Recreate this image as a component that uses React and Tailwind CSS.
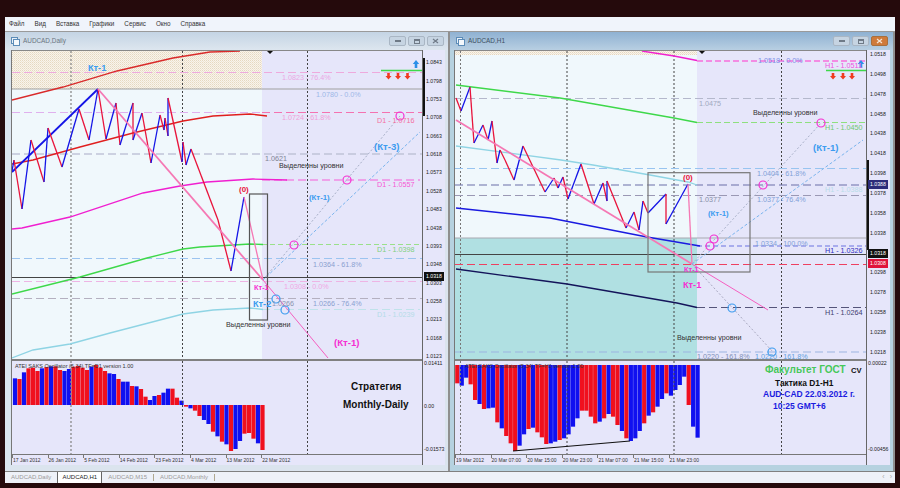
import React from 'react';

const BLUE = '#1414e6';
const RED = '#e8143c';
const PINK = '#f472b0';
const KT = '#3c9cf0';
const MAGENTA = '#f52fd2';

const menu = ['Файл', 'Вид', 'Вставка', 'Графики', 'Сервис', 'Окно', 'Справка'];

// all chart coordinates are page pixels, the svg viewBox takes care of the offset
const leftPrices = ['1.0843', '1.0798', '1.0753', '1.0708', '1.0663', '1.0618', '1.0573', '1.0528', '1.0483', '1.0438', '1.0393', '1.0348', '1.0303', '1.0258', '1.0213', '1.0168', '1.0123'];
const rightPrices = ['1.0518', '1.0498', '1.0478', '1.0458', '1.0438', '1.0418', '1.0398', '1.0378', '1.0358', '1.0338', '1.0318', '1.0298', '1.0278', '1.0258', '1.0238', '1.0218'];
const leftDates = ['17 Jan 2012', '26 Jan 2012', '5 Feb 2012', '14 Feb 2012', '23 Feb 2012', '4 Mar 2012', '13 Mar 2012', '22 Mar 2012'];
const rightDates = ['19 Mar 2012', '20 Mar 07:00', '20 Mar 15:00', '20 Mar 23:00', '21 Mar 07:00', '21 Mar 15:00', '21 Mar 23:00'];

const leftZig = [[12, 171], [14, 160], [22, 209], [31, 140], [44, 182], [48, 128], [62, 167], [79, 109], [89, 140], [98, 89], [106, 139], [116, 103], [120, 145], [133, 103], [133, 140], [142, 113], [151, 163], [160, 115], [164, 130], [165, 118], [168, 136], [168, 98], [182, 162], [183, 142], [186, 165], [191, 149], [218, 220], [231, 271], [244, 197]];
const rightZig = [[456, 98], [461, 111], [470, 87], [474, 143], [483, 125], [488, 140], [492, 121], [497, 163], [500, 150], [505, 160], [514, 180], [523, 146], [545, 192], [554, 178], [558, 188], [563, 177], [568, 199], [581, 164], [594, 204], [603, 183], [607, 201], [607, 181], [626, 228], [634, 212], [639, 230], [643, 201], [648, 213], [666, 194], [666, 224], [688, 184]];

// [colour, top of bar in 3x zoom units]
const leftBars = [['b', 70], ['r', 72], ['b', 52], ['r', 40], ['r', 38], ['r', 48], ['b', 40], ['r', 36], ['b', 34], ['r', 34], ['r', 45], ['b', 48], ['b', 42], ['r', 35], ['r', 33], ['r', 38], ['r', 45], ['b', 35], ['r', 30], ['r', 38], ['r', 48], ['b', 55], ['b', 57], ['r', 72], ['b', 80], ['b', 80], ['r', 93], ['b', 94], ['r', 102], ['r', 125], ['b', 135], ['b', 123], ['r', 120], ['b', 113], ['b', 101], ['r', 101], ['r', 128], ['b', 137], ['r', 155], ['b', 160], ['r', 167], ['r', 183], ['b', 195], ['b', 207], ['r', 230], ['b', 244], ['r', 260], ['b', 268], ['r', 288], ['b', 282], ['b', 258], ['r', 236], ['r', 234], ['r', 251], ['b', 265], ['r', 285]];
const rightBars = [['r', 85], ['b', 92], ['b', 68], ['r', 88], ['r', 135], ['b', 147], ['r', 162], ['b', 160], ['b', 158], ['r', 202], ['b', 220], ['r', 243], ['r', 265], ['r', 288], ['b', 272], ['b', 238], ['r', 222], ['b', 218], ['r', 232], ['r', 247], ['r', 267], ['b', 265], ['b', 260], ['r', 255], ['b', 250], ['b', 238], ['b', 215], ['b', 190], ['r', 167], ['r', 167], ['r', 185], ['r', 205], ['b', 200], ['r', 190], ['b', 177], ['r', 185], ['r', 210], ['b', 228], ['r', 250], ['b', 258], ['b', 250], ['b', 228], ['r', 205], ['b', 182], ['r', 172], ['b', 155], ['b', 132], ['r', 115], ['b', 122], ['b', 105], ['b', 90], ['b', 65], ['r', 150], ['b', 215], ['b', 248]];

const Poly = ({ pts, color, w = 1.3, dash }) => (
    <polyline points={pts.map(p => p.join(',')).join(' ')} fill="none" stroke={color} strokeWidth={w} strokeDasharray={dash} />
);

const HLine = ({ y, x1, x2, color, w = 1, dash = '8 4' }) => (
    <line x1={x1} x2={x2} y1={y} y2={y} stroke={color} strokeWidth={w} strokeDasharray={dash} />
);

const VDots = ({ x, y1, y2, color = '#444', w = 1 }) => (
    <line x1={x} x2={x} y1={y1} y2={y2} stroke={color} strokeWidth={w} strokeDasharray="2 2" />
);

const Ring = ({ x, y, color = MAGENTA }) => (
    <circle cx={x} cy={y} r="4" fill="none" stroke={color} strokeWidth="1.2" />
);

const T = ({ x, y, color = '#333', size = 7.2, bold, children }) => (
    <text x={x} y={y} fill={color} fontSize={size} fontWeight={bold ? 700 : 400}>{children}</text>
);

const Zig = ({ pts }) => pts.slice(1).map((p, i) => (
    <line key={i} x1={pts[i][0]} y1={pts[i][1]} x2={p[0]} y2={p[1]} stroke={p[1] < pts[i][1] ? BLUE : RED} strokeWidth="1.3" />
));

const DownArrow = ({ x, y }) => (
    <polygon points={`${x - 1.3},${y - 3} ${x + 1.3},${y - 3} ${x + 1.3},${y} ${x + 3},${y} ${x},${y + 3.5} ${x - 3},${y} ${x - 1.3},${y}`} fill="#f03a1e" />
);

const UpArrow = ({ x, y }) => (
    <polygon points={`${x - 1.3},${y + 4} ${x + 1.3},${y + 4} ${x + 1.3},${y} ${x + 3.2},${y} ${x},${y - 4} ${x - 3.2},${y} ${x - 1.3},${y}`} fill="#2b8fe8" />
);

const Band = ({ id, x, y, width, height }) => (
    <>
        <defs>
            <pattern id={id} width="2" height="2" patternUnits="userSpaceOnUse">
                <rect width="2" height="2" fill="#f8f4ec" />
                <rect width="1" height="1" fill="#e6d8c0" />
                <rect x="1" y="1" width="1" height="1" fill="#efe4d2" />
            </pattern>
        </defs>
        <rect x={x} y={y} width={width} height={height} fill={`url(#${id})`} />
    </>
);

const DailyMain = () => (
    <svg viewBox="12 51 410 308" className="block w-[410px] h-[308px]">
        <rect x="12" y="51" width="250" height="308" fill="#f0f8fc" />
        <rect x="262" y="51" width="160" height="308" fill="#e6e6fa" />
        <Band id="dailyBand" x={12} y={51} width={250} height={38} />
        <VDots x={71} y1={51} y2={359} color="#8a8a8a" w={1.3} />
        <VDots x={182.5} y1={51} y2={359} />
        <VDots x={307.5} y1={51} y2={359} />

        <line x1="12" x2="422" y1="89" y2="89" stroke="#a0a0a0" />
        <HLine y={72.5} x1={12} x2={422} color="#eeaadd" />
        <HLine y={112.5} x1={12} x2={262} color="#e0b0ee" />
        <HLine y={112.5} x1={262} x2={422} color={PINK} />
        <HLine y={154} x1={12} x2={422} color="#c0c4d8" w={1.5} />
        <HLine y={180} x1={262} x2={420} color="#f55fd8" />
        <HLine y={244.5} x1={262} x2={420} color="#9ae08a" dash="5 3" />
        <HLine y={258.5} x1={12} x2={422} color="#9cc4f0" />
        <line x1="12" x2="422" y1="277.5" y2="277.5" stroke="#444" />
        <HLine y={281.5} x1={12} x2={422} color="#eeb4e4" />
        <HLine y={298.5} x1={12} x2={422} color="#b4b0c0" />
        <HLine y={309.5} x1={262} x2={420} color="#bfe2ea" />

        <Poly color="#d92a2a" pts={[[12, 100], [63, 87], [117, 71], [173, 58], [210, 52], [240, 51]]} />
        <Poly color="#e01f1f" pts={[[12, 164], [33, 160], [80, 147], [133, 133], [183, 121], [213, 116], [250, 114], [267, 116]]} />
        <Poly color="#f01fd0" pts={[[12, 229], [22, 228], [70, 217], [143, 193], [180, 186], [207, 182], [253, 179], [287, 180]]} />
        <Poly color="#3ed84a" pts={[[12, 294], [80, 277], [147, 258], [183, 249], [200, 247], [250, 244], [263, 244.5]]} />
        <Poly color="#8fd4e4" pts={[[12, 358], [33, 350], [70, 344], [110, 333], [183, 314], [213, 310], [250, 308], [263, 309.5]]} />

        <Poly w={1.8} color={BLUE} pts={[[12, 172], [98, 89]]} />
        <Zig pts={leftZig} />
        <Poly w={1.8} color="#f578b4" pts={[[98, 89], [263, 280]]} />
        <Poly w={1.3} color="#f578b4" pts={[[244, 197], [263, 280]]} />
        <Poly w={1} color="#f55fc0" pts={[[263, 280], [328, 358]]} />
        <Poly w={1} color="#a8b0c8" dash="2 2" pts={[[263, 280], [400, 116]]} />
        <Poly w={1} color="#7ab4ee" dash="3 2" pts={[[263, 280], [420, 132]]} />

        <rect x="249.5" y="194" width="18" height="126" fill="none" stroke="#555" strokeWidth="1.2" />
        <Ring x={400} y={116} />
        <Ring x={347} y={180} />
        <Ring x={294} y={245} />
        <Ring x={276} y={299} color="#3c9cf0" />
        <Ring x={285} y={310} color="#3c9cf0" />
        <polygon points="267,51 273,51 270,54" fill="#111" />

        <UpArrow x={416} y={64} />
        <line x1="381" x2="422" y1="70.5" y2="70.5" stroke="#3ed84a" strokeWidth="1.5" />
        <DownArrow x={388.5} y={76} />
        <DownArrow x={398} y={76} />
        <DownArrow x={407.5} y={76} />

        <T x={88} y={70.5} color={KT} size={9.2} bold>Кт-1</T>
        <T x={282} y={79.5} color="#eaa8e4">1.0823 - 76.4%</T>
        <T x={316} y={96.5} color="#9db8e8">1.0780 - 0.0%</T>
        <T x={282} y={119.5} color="#f0a0d8">1.0724 - 61.8%</T>
        <T x={377} y={122.5} color="#f570a0">D1 - 1.0716</T>
        <T x={374} y={150} color={KT} size={9.6} bold>(Кт-3)</T>
        <T x={265} y={161} color="#7f8494">1.0621</T>
        <T x={279} y={168}>Выделенны уровни</T>
        <T x={377} y={187} color="#f655d4">D1 - 1.0557</T>
        <T x={239} y={192} color={RED} size={8} bold>(0)</T>
        <T x={309} y={200} color={KT} size={7.8} bold>(Кт-1)</T>
        <T x={377} y={252} color="#80d080">D1 - 1.0398</T>
        <T x={313} y={266.5} color="#8aa0d0">1.0364 - 61.8%</T>
        <T x={284} y={288.5} color="#f0a8e4">1.0308 - 0.0%</T>
        <T x={254} y={290} color={MAGENTA} size={7.4} bold>Кт-1</T>
        <T x={272} y={306} color="#8a94b0">1.0266</T>
        <T x={253} y={307} color={KT} size={9.2} bold>Кт-2</T>
        <T x={313} y={305.5} color="#8aa0d0">1.0266 - 76.4%</T>
        <T x={377} y={316.5} color="#b4dce8">D1 - 1.0239</T>
        <T x={226} y={327}>Выделенны уровни</T>
        <T x={334} y={346} color={MAGENTA} size={9.6} bold>(Кт-1)</T>
    </svg>
);

const HourMain = () => (
    <svg viewBox="455 51 411 308" className="block w-[411px] h-[308px]">
        <rect x="455" y="51" width="242" height="308" fill="#f0f8fc" />
        <rect x="697" y="51" width="169" height="308" fill="#e6e6fa" />
        <rect x="455" y="238" width="242" height="121" fill="#b0e0e2" />
        <Band id="hourBand" x={455} y={51} width={242} height={4} />
        <VDots x={460.5} y1={51} y2={359} color="#777" />
        <VDots x={567} y1={51} y2={359} />
        <VDots x={674} y1={51} y2={359} />
        <VDots x={781.5} y1={51} y2={359} />

        <HLine y={61} x1={697} x2={866} color="#f76fdc" w={1.5} dash="6 3" />
        <HLine y={98.5} x1={455} x2={866} color="#b4b8cc" dash="8 4" />
        <HLine y={122.5} x1={697} x2={866} color="#8ee07e" dash="6 3" />
        <HLine y={168.5} x1={455} x2={866} color="#98c4f0" />
        <HLine y={185} x1={455} x2={866} color="#6a6ea8" />
        <HLine y={195.5} x1={455} x2={866} color="#9a98b4" />
        <line x1="455" x2="866" y1="238" y2="238" stroke="#a8a8b0" />
        <HLine y={246} x1={697} x2={866} color="#6a72e0" dash="5 3" />
        <line x1="455" x2="866" y1="254.5" y2="254.5" stroke="#444" />
        <HLine y={264.5} x1={455} x2={866} color="#ee4060" />
        <HLine y={307.5} x1={697} x2={866} color="#55557a" />
        <HLine y={352} x1={455} x2={866} color="#9cb4e0" />

        <Poly color="#f01fd0" pts={[[642, 51], [674, 56], [697, 60.5]]} />
        <Poly color="#3ed84a" pts={[[456, 85], [560, 98], [600, 105], [674, 118], [697, 122.5]]} />
        <Poly color="#8fd4e4" pts={[[456, 146], [561, 160], [593, 165], [650, 175], [688, 182], [697, 185]]} />
        <Poly w={1.5} color="#1a1ae0" pts={[[456, 208], [550, 218], [647, 237], [700, 246]]} />
        <Poly w={1.3} color="#14145a" pts={[[456, 269], [567, 284], [677, 303], [697, 307.5]]} />

        <Zig pts={rightZig} />
        <Poly w={1.8} color="#f578b4" pts={[[456, 120], [692, 264]]} />
        <Poly w={1.3} color="#f578b4" pts={[[688, 184], [692, 264]]} />
        <Poly w={1} color="#f55fc0" pts={[[692, 264], [768, 310]]} />
        <Poly w={1} color="#a8a8c0" dash="2 2" pts={[[692, 264], [773, 352]]} />
        <Poly w={1} color="#a8b0c8" dash="2 2" pts={[[692, 264], [821, 123]]} />
        <Poly w={1} color="#7ab4ee" dash="3 2" pts={[[692, 264], [863, 140]]} />

        <rect x="648" y="172.7" width="102" height="99.3" fill="none" stroke="#777" strokeWidth="1.2" />
        <Ring x={821} y={123} />
        <Ring x={763} y={185} />
        <Ring x={714} y={239} />
        <Ring x={710} y={246} />
        <Ring x={732} y={308} color="#3c9cf0" />
        <Ring x={772} y={352} color="#3c9cf0" />
        <polygon points="699,51 705,51 702,54" fill="#111" />

        <UpArrow x={861} y={64} />
        <line x1="826" x2="866" y1="70.5" y2="70.5" stroke="#3ed84a" strokeWidth="1.5" />
        <DownArrow x={833} y={76} />
        <DownArrow x={843} y={76} />
        <DownArrow x={852} y={76} />

        <T x={758} y={62.5} color="#8090e8">1.0518 - 0.0%</T>
        <T x={825} y={68} color="#f050e0">H1 - 1.0511</T>
        <T x={699} y={105.5} color="#a0a8c0">1.0475</T>
        <T x={753} y={114.5}>Выделенны уровни</T>
        <T x={825} y={129.5} color="#70c870">H1 - 1.0450</T>
        <T x={813} y={151} color={KT} size={9.6} bold>(Кт-1)</T>
        <T x={757} y={175.5} color="#80a0d8">1.0404 - 61.8%</T>
        <T x={683} y={180} color={RED} size={8} bold>(0)</T>
        <T x={825} y={191.5} color="#b8dce8">H1 - 1.0388</T>
        <T x={699} y={202} color="#8890a8">1.0377</T>
        <T x={757} y={202} color="#80a0d8">1.0377 - 76.4%</T>
        <T x={708} y={216} color={KT} size={7.8} bold>(Кт-1)</T>
        <T x={755} y={245.5} color="#80a0d8">1.0334 - 100.0%</T>
        <T x={825} y={253} color="#3030c0">H1 - 1.0326</T>
        <T x={684} y={272} color={MAGENTA} size={7.4} bold>Кт-1</T>
        <T x={683} y={288} color={MAGENTA} size={9.2} bold>Кт-1</T>
        <T x={825} y={314.5} color="#404070">H1 - 1.0264</T>
        <T x={677} y={339.5}>Выделенны уровни</T>
        <T x={697} y={358.5} color="#8090b8">1.0220 - 161.8%</T>
        <T x={755} y={358.5} color="#60a0e0">1.0220 - 161.8%</T>
    </svg>
);

const Bar = ({ kind, x, y1, y2 }) => (
    <rect x={x - 2.1} y={Math.min(y1, y2)} width="4.2" height={Math.abs(y2 - y1)} fill={kind === 'b' ? '#1010f0' : '#f0101e'} />
);

const DailyOsc = () => (
    <svg viewBox="12 361 410 93" className="block w-[410px] h-[93px]">
        <rect x="12" y="361" width="410" height="93" fill="#e6e6fa" />
        {leftBars.map(([kind, v], i) => (
            <Bar key={i} kind={kind} x={15 + i * 4.5} y1={405} y2={355 + v / 3} />
        ))}
        <VDots x={71} y1={361} y2={454} color="#8a8a8a" w={1.3} />
        <VDots x={182.5} y1={361} y2={454} />
        <VDots x={307.5} y1={361} y2={454} />
        <T x={15} y={368} size={5.5}>ATEI SAKS Oscillator (5,34)  TF=D1  version 1.00</T>
        <T x={351} y={390} color="#111" size={10} bold>Стратегия</T>
        <T x={343} y={408} color="#111" size={10} bold>Monthly-Daily</T>
    </svg>
);

const HourOsc = () => (
    <svg viewBox="455 361 411 93" className="block w-[411px] h-[93px]">
        <rect x="455" y="361" width="411" height="93" fill="#e6e6fa" />
        {rightBars.map(([kind, v], i) => (
            <Bar key={i} kind={kind} x={457.3 + i * 4.45} y1={365} y2={355 + v / 3} />
        ))}
        <VDots x={460.5} y1={361} y2={454} color="#777" />
        <VDots x={567} y1={361} y2={454} />
        <VDots x={674} y1={361} y2={454} />
        <VDots x={781.5} y1={361} y2={454} />
        <line x1="513" y1="451" x2="630" y2="441" stroke="#111" strokeWidth="1.2" />
        <T x={465} y={368} size={5.5}>ATEI SAKS Oscillator (5,34)  TF=H1  version 1.00</T>
        <T x={765} y={373} color="#46c85a" size={10} bold>Факультет ГОСТ</T>
        <T x={851} y={373} color="#111" size={7.6} bold>CV</T>
        <T x={775} y={385.5} color="#111" size={8.4} bold>Тактика  D1-H1</T>
        <T x={763} y={397} color="#1c1ce0" size={8.5} bold>AUD-CAD 22.03.2012 г.</T>
        <T x={773} y={409} color="#1c1ce0" size={8.5} bold>10:25   GMT+6</T>
    </svg>
);

const TitleIcon = () => (
    <svg viewBox="0 0 9 9" className="w-[9px] h-[9px] mr-[3px]">
        <rect x="0.5" y="0.5" width="6" height="6" fill="#e8f0f8" stroke="#5c8cb8" />
        <rect x="2.5" y="2.5" width="6" height="6" fill="#f4f8fc" stroke="#5c8cb8" />
    </svg>
);

const WinButton = ({ kind, hot }) => (
    <span className={`flex h-[10px] w-[17px] items-center justify-center rounded-[2px] border ${hot ? 'border-[#a8703e] bg-[#cf7a3a]' : 'border-[#a9b6c4] bg-[#c6d4e2]'}`}>
        {kind === 'min' && <span className="h-[2px] w-[6px] bg-[#6f7a87]" />}
        {kind === 'max' && <span className="h-[5px] w-[6px] border border-[#6f7a87] border-t-2" />}
        {kind === 'close' && (
            <svg viewBox="0 0 7 6" className="h-[6px] w-[7px]">
                <path d="M1 1l5 4M6 1L1 5" stroke={hot ? '#f4e6d8' : '#6f7a87'} strokeWidth="1.2" />
            </svg>
        )}
    </span>
);

const Prices = ({ items, rowClass, listClass }) => (
    <div className={`flex flex-col ${listClass}`}>
        {items.map(p => (
            <span key={p} className={`${rowClass} pl-[3px] flex items-center text-[5.2px] text-[#222]`}>{p}</span>
        ))}
    </div>
);

const Tag = ({ className, children }) => (
    <span className={`absolute left-[1px] h-[9px] w-[20px] pl-[2px] text-[5.2px] leading-[9px] text-white ${className}`}>{children}</span>
);

const Dates = ({ items }) => (
    <div className="flex h-[11px] bg-[#e6e6fa] border-t border-[#777]">
        {items.map(d => (
            <span key={d} className="w-[35.6px] shrink-0 whitespace-nowrap border-l border-[#777] h-[3px] pt-[2px] text-[5px] leading-[7px] text-[#333]">{d}</span>
        ))}
    </div>
);

const Tab = ({ children, active }) => (
    <span className={active
        ? 'flex h-full w-[45px] items-center justify-center border-x border-[#666] bg-white text-[6px] text-[#222]'
        : 'flex h-full items-center px-[6px] text-[6px] text-[#9a9a9a]'}>
        {children}
    </span>
);

function App() {
    return (
        <div className="flex h-[488px] w-[900px] flex-col overflow-hidden bg-[#250a0c] px-[5px] pb-[5px] pt-[17px] font-['Liberation_Sans',sans-serif]">
            <nav className="flex h-[15px] items-center gap-[10px] border-b border-[#9a9a9a] bg-[#f0f4fb] pl-[4px] text-[6.3px] text-[#333]">
                {menu.map(m => <span key={m}>{m}</span>)}
            </nav>

            <main className="flex h-[439px] gap-[2px] bg-[#8f8f8f]">
                {/* AUDCAD,Daily */}
                <section className="flex w-[443px] flex-col bg-[#dbe4ee]">
                    <header className="flex h-[18px] items-center bg-gradient-to-b from-[#c4d4e4] to-[#dde6ef] pl-[6px] pr-[4px] text-[6.4px] text-[#6a7480]">
                        <TitleIcon />
                        <span className="flex-1">AUDCAD,Daily</span>
                        <div className="flex gap-[2px]">
                            <WinButton kind="min" />
                            <WinButton kind="max" />
                            <WinButton kind="close" />
                        </div>
                    </header>
                    <div className="flex pl-[6px]">
                        <div className="w-[411px] border-l border-[#777]">
                            <div className="border-t border-[#888]"><DailyMain /></div>
                            <div className="h-[2px] bg-[#808080]" />
                            <DailyOsc />
                            <Dates items={leftDates} />
                        </div>
                        <div className="relative flex h-[415px] w-[23px] flex-col overflow-hidden border-l border-[#666] bg-[#e6e6fa] pt-[1px]">
                            <span className="absolute left-0 top-[8px] h-[58px] w-[2px] bg-[#111]" />
                            <Prices items={leftPrices} rowClass="h-[18.36px]" listClass="mt-[3px]" />
                            <Tag className="top-[222px] bg-[#111]">1.0318</Tag>
                            <div className="absolute left-0 top-[310px] flex h-[94px] w-full flex-col justify-between pl-[1px] text-[5.2px] text-[#222]">
                                <span>0.01411</span>
                                <span>0.00</span>
                                <span>-0.01573</span>
                            </div>
                        </div>
                    </div>
                </section>

                {/* AUDCAD,H1 */}
                <section className="flex w-[443px] flex-col bg-[#b6d2e0]">
                    <header className="flex h-[18px] items-center bg-gradient-to-b from-[#8fb1d2] to-[#b8cfe2] pl-[6px] pr-[5px] text-[6.4px] text-[#3d4f62]">
                        <TitleIcon />
                        <span className="flex-1">AUDCAD,H1</span>
                        <div className="flex gap-[2px]">
                            <WinButton kind="min" />
                            <WinButton kind="max" />
                            <WinButton kind="close" hot />
                        </div>
                    </header>
                    <div className="flex pl-[4px]">
                        <div className="w-[412px] border-l border-[#777]">
                            <div className="border-t border-[#888]"><HourMain /></div>
                            <div className="h-[2px] bg-[#808080]" />
                            <HourOsc />
                            <Dates items={rightDates} />
                        </div>
                        <div className="relative flex h-[415px] w-[24px] flex-col overflow-hidden border-l border-[#666] bg-[#e6e6fa]">
                            <span className="absolute left-0 top-[110px] h-[90px] w-[2px] bg-[#111]" />
                            <Prices items={rightPrices} rowClass="h-[19.87px] shrink-0" listClass="-mt-[5px]" />
                            <Tag className="top-[130px] bg-[#2c2c7a]">1.0388</Tag>
                            <Tag className="top-[199px] bg-[#111]">1.0318</Tag>
                            <Tag className="top-[209px] bg-[#e0143c]">1.0308</Tag>
                            <div className="absolute left-0 top-[310px] flex h-[94px] w-full flex-col justify-between pl-[1px] text-[5.2px] text-[#222]">
                                <span>0.00022</span>
                                <span>-0.00456</span>
                            </div>
                        </div>
                    </div>
                </section>
            </main>

            <footer className="flex h-[12px] items-center border-t border-[#808080] bg-[#eef1f8]">
                <Tab>AUDCAD,Daily</Tab>
                <Tab active>AUDCAD,H1</Tab>
                <Tab>AUDCAD,M15</Tab>
                <span className="h-[7px] w-px bg-[#b0a890]" />
                <Tab>AUDCAD,Monthly</Tab>
                <span className="h-[7px] w-px bg-[#b0a890]" />
                <span className="ml-auto mr-[3px] flex gap-[5px] text-[7px] text-[#aaa]">
                    <span>‹</span>
                    <span>›</span>
                </span>
            </footer>
        </div>
    );
}

export default App;
